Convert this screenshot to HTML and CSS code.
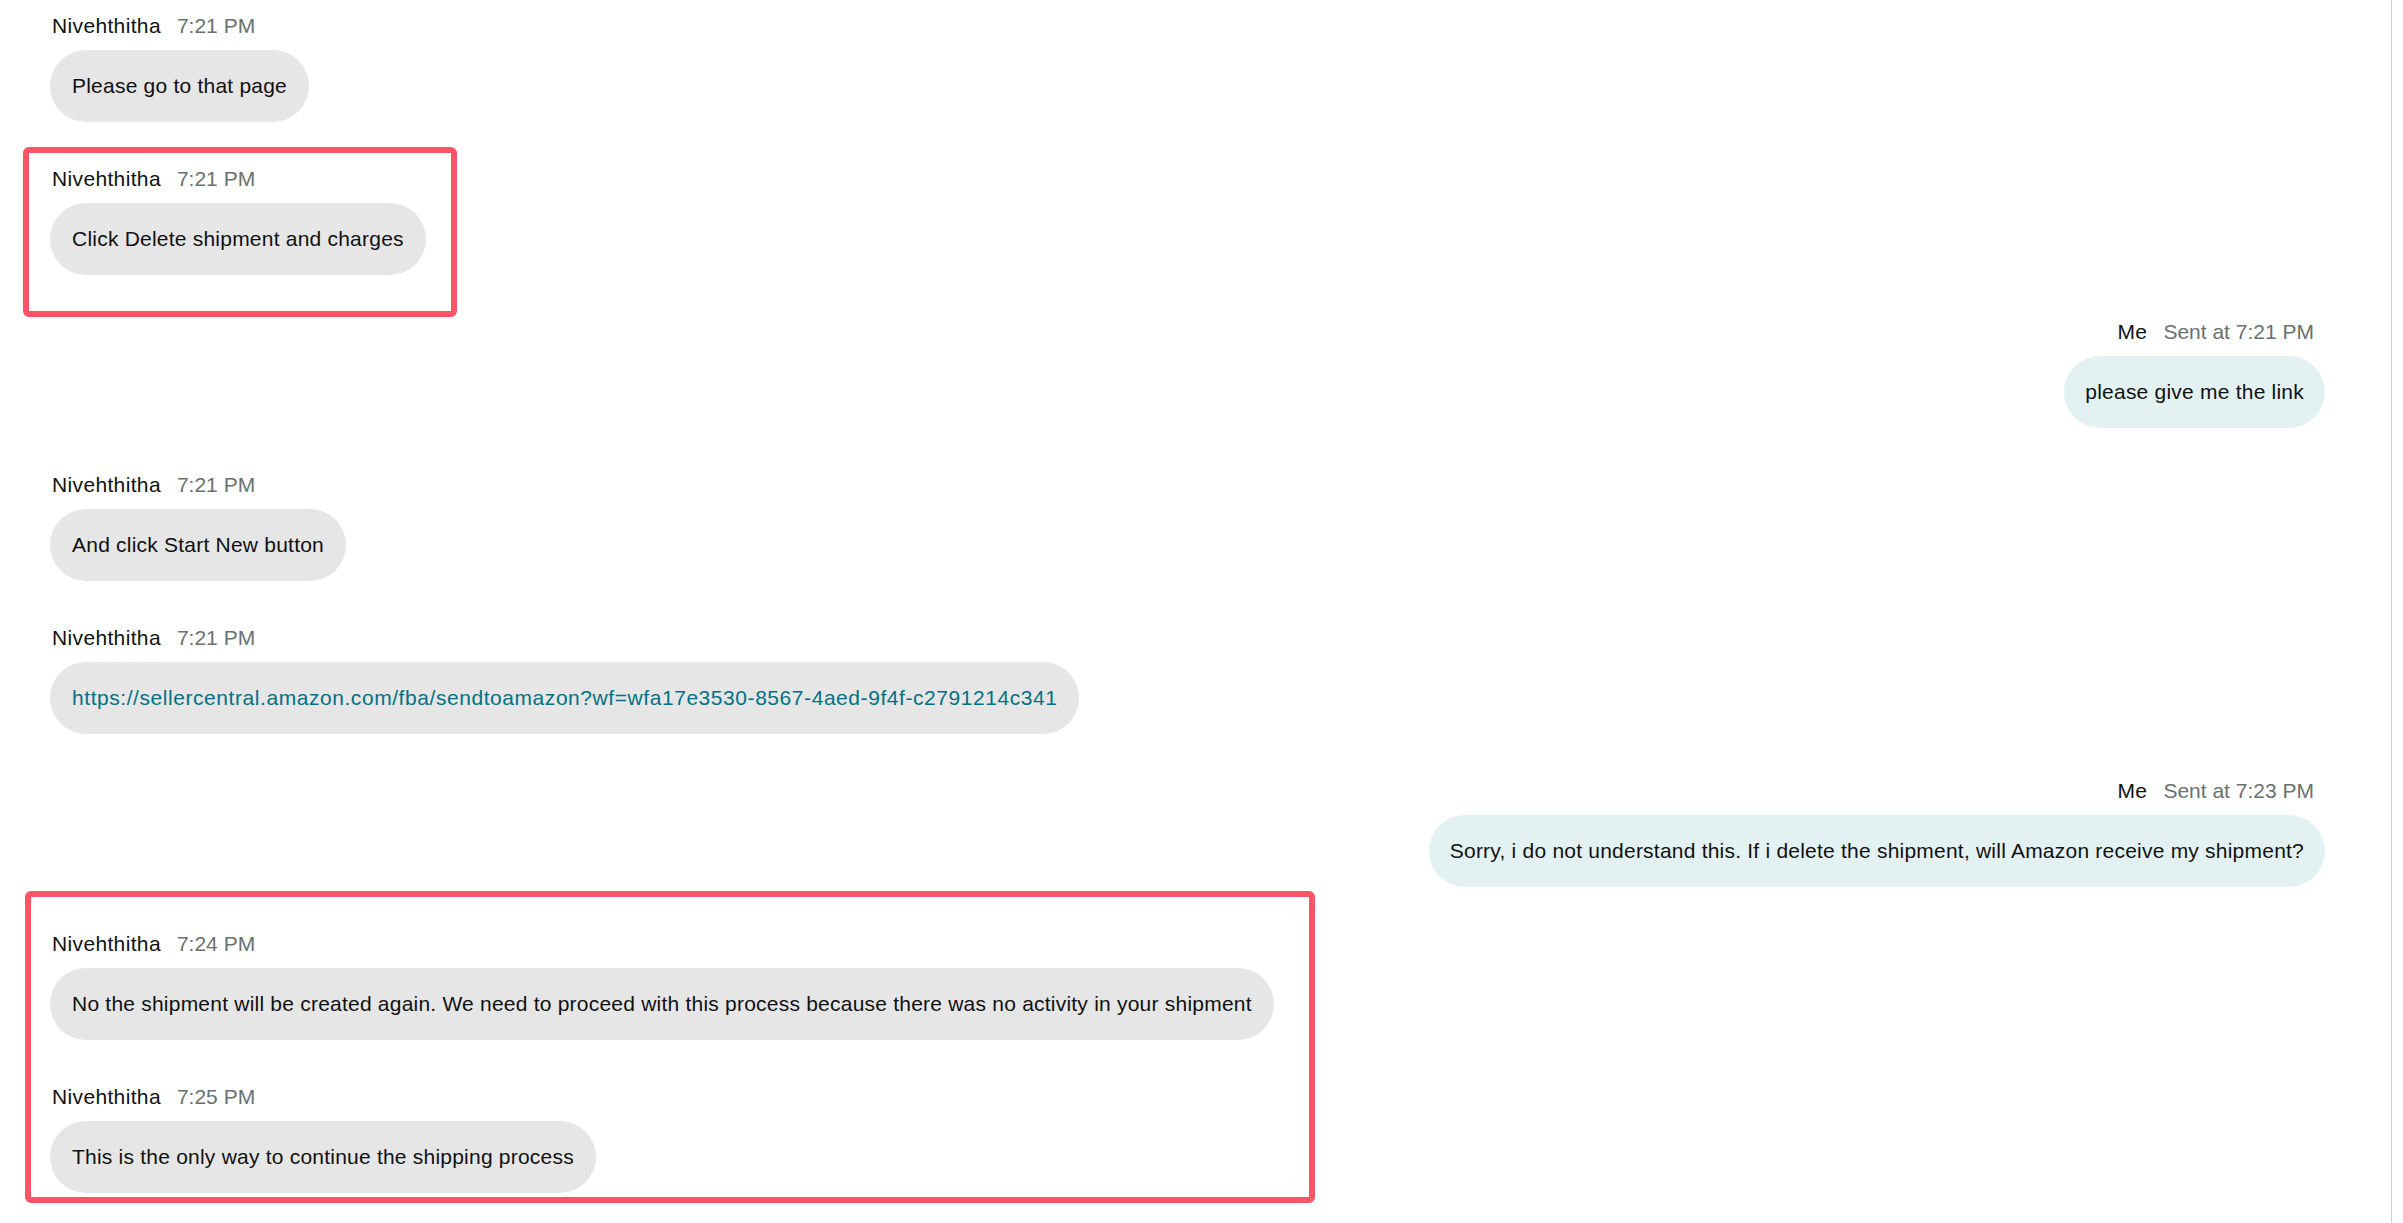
FILE: index.html
```html
<!DOCTYPE html>
<html lang="en">
<head>
<meta charset="utf-8">
<title>Messages</title>
<link rel="stylesheet" href="styles.css">
</head>
<body>
<div class="pane">
  <div class="thread">
    <div class="msg">
      <div class="meta"><span class="who">Nivehthitha</span><span class="when">7:21 PM</span></div>
      <div class="bubble">Please go to that page</div>
    </div>
    <div class="msg">
      <div class="meta"><span class="who">Nivehthitha</span><span class="when">7:21 PM</span></div>
      <div class="bubble">Click Delete shipment and charges</div>
    </div>
    <div class="msg sent">
      <div class="meta"><span class="who">Me</span><span class="when">Sent at 7:21 PM</span></div>
      <div class="bubble">please give me the link</div>
    </div>
    <div class="msg">
      <div class="meta"><span class="who">Nivehthitha</span><span class="when">7:21 PM</span></div>
      <div class="bubble">And click Start New button</div>
    </div>
    <div class="msg">
      <div class="meta"><span class="who">Nivehthitha</span><span class="when">7:21 PM</span></div>
      <div class="bubble"><a class="link" href="#">https://sellercentral.amazon.com/fba/sendtoamazon?wf=wfa17e3530-8567-4aed-9f4f-c2791214c341</a></div>
    </div>
    <div class="msg sent">
      <div class="meta"><span class="who">Me</span><span class="when">Sent at 7:23 PM</span></div>
      <div class="bubble">Sorry, i do not understand this. If i delete the shipment, will Amazon receive my shipment?</div>
    </div>
    <div class="msg">
      <div class="meta"><span class="who">Nivehthitha</span><span class="when">7:24 PM</span></div>
      <div class="bubble">No the shipment will be created again. We need to proceed with this process because there was no activity in your shipment</div>
    </div>
    <div class="msg">
      <div class="meta"><span class="who">Nivehthitha</span><span class="when">7:25 PM</span></div>
      <div class="bubble">This is the only way to continue the shipping process</div>
    </div>
  </div>
  <div class="mark mark-one"></div>
  <div class="mark mark-two"></div>
</div>
</body>
</html>
```

FILE: styles.css
```css
html, body {
  margin: 0;
  padding: 0;
  background: #ffffff;
}

body {
  font-family: "Liberation Sans", Arial, sans-serif;
  font-size: 21px;
  color: #0f1111;
  overflow: hidden;
}

.pane {
  position: relative;
  width: 2392px;
  height: 1223px;
  box-sizing: border-box;
  border-right: 1px solid #cfcfd4;
  padding: 14px 66px 0 50px;
}

.thread {
  display: flex;
  flex-direction: column;
}

.msg {
  display: flex;
  flex-direction: column;
  align-items: flex-start;
  margin-bottom: 45px;
}

.msg.sent {
  align-items: flex-end;
}

.meta {
  display: flex;
  gap: 16px;
  line-height: 24px;
  height: 24px;
  margin: 0 0 12px 2px;
  white-space: nowrap;
}

.msg.sent .meta {
  margin: 0 11px 12px 0;
}

.who {
  color: #0f1111;
  letter-spacing: 0.35px;
}

.when {
  color: #6b7070;
}

.bubble {
  box-sizing: border-box;
  height: 72px;
  line-height: 30px;
  padding: 21px 22px;
  border-radius: 36px;
  background: #e6e6e6;
  white-space: nowrap;
  letter-spacing: 0.22px;
}

.msg.sent .bubble {
  background: #e3f1f3;
  padding: 21px 21px;
}

.link {
  color: #007185;
  text-decoration: none;
  letter-spacing: 0.56px;
}

.mark {
  position: absolute;
  box-sizing: border-box;
  border: 6px solid #fe5467;
  border-radius: 6px;
  pointer-events: none;
}

.mark-one {
  left: 23px;
  top: 147px;
  width: 434px;
  height: 170px;
}

.mark-two {
  left: 25px;
  top: 891px;
  width: 1290px;
  height: 312px;
}
```
